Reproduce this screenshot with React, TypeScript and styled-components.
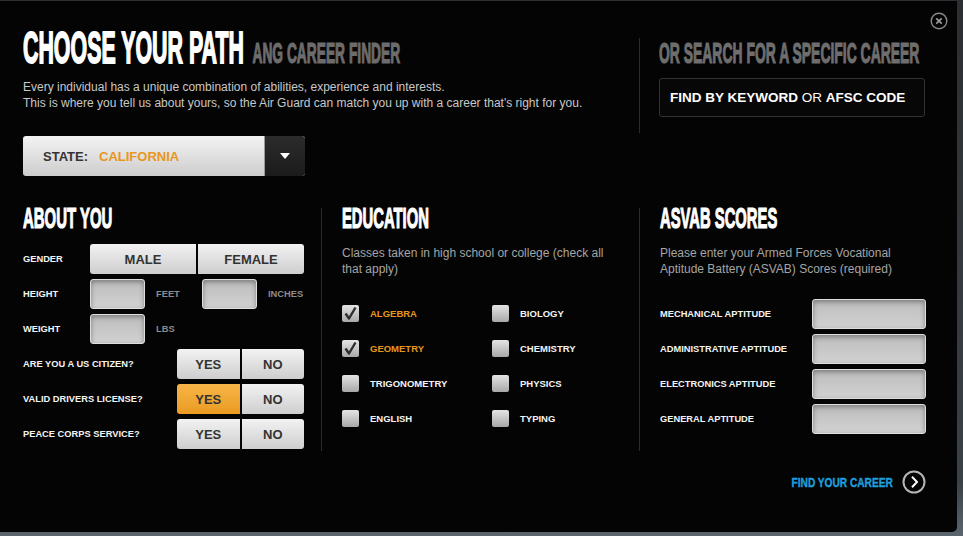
import React from 'react';
import styled, { createGlobalStyle } from 'styled-components';

const GlobalStyle = createGlobalStyle`
  html, body { margin: 0; padding: 0; background: #3f474d; }
  body { font-family: "Liberation Sans", Arial, sans-serif; width: 963px; height: 536px; overflow: hidden; }
  * { box-sizing: border-box; }
`;

const Frame = styled.div`
  width: 963px;
  height: 536px;
  padding-top: 1px;
  background: linear-gradient(#2b2f33, #3a4147 90%, #5b656d);
`;

const Panel = styled.div`
  position: relative;
  width: 957px;
  height: 531px;
  padding: 0 31px 0 23px;
  background: #040404;
  border-radius: 0 0 5px 0;
  color: #fff;
  overflow: hidden;
`;

const CloseButton = styled.button`
  position: absolute;
  top: 11px;
  right: 9px;
  width: 18px;
  height: 18px;
  padding: 0;
  border: 0;
  background: none;
  display: flex;
`;

const TopRow = styled.div`
  display: flex;
`;

const IntroCol = styled.div`
  width: 616px;
  flex: none;
  padding-top: 24px;
`;

const SearchCol = styled.div`
  margin-top: 37px;
  height: 95px;
  flex: 1;
  min-width: 0;
  border-left: 1px solid #2a2a2a;
  padding-left: 19px;
`;

const Heading = styled.h2<{ $size: number; $scale: number; $color?: string; $stroke?: number }>`
  margin: 0;
  display: block;
  width: max-content;
  white-space: nowrap;
  font-family: "Liberation Sans", Arial, sans-serif;
  font-weight: 700;
  font-size: ${(p) => p.$size}px;
  line-height: ${(p) => p.$size}px;
  color: ${(p) => p.$color || '#fff'};
  -webkit-text-stroke: ${(p) => p.$stroke ?? 1.2}px ${(p) => p.$color || '#fff'};
  transform: scaleX(${(p) => p.$scale});
  transform-origin: 0 0;
`;

const TitleSub = styled.span`
  font-size: 29px;
  line-height: 29px;
  color: #6c6c6c;
  -webkit-text-stroke: 1.2px #6c6c6c;
  margin-left: 18px;
`;

const Intro = styled.p`
  margin: 9px 0 0;
  font-size: 12px;
  line-height: 16px;
  color: #c8c8c8;
`;

const Select = styled.div`
  margin-top: 25px;
  width: 282px;
  height: 40px;
  display: flex;
  border-radius: 3px;
  overflow: hidden;
  background: linear-gradient(#f3f3f3, #cdcdcd);
`;

const SelectValue = styled.div`
  flex: 1;
  display: flex;
  align-items: center;
  gap: 11px;
  padding-left: 20px;
  font-size: 13px;
  font-weight: 700;
  color: #333;
`;

const Orange = styled.span`
  color: #e8961d;
`;

const SelectArrow = styled.div`
  width: 41px;
  display: flex;
  align-items: center;
  justify-content: center;
  background: linear-gradient(#2c2c2c, #1b1b1b);
  border-left: 1px solid #9a9a9a;
`;

const SearchBox = styled.div`
  margin-top: 10px;
  width: 266px;
  height: 39px;
  display: flex;
  align-items: center;
  padding-left: 10px;
  border: 1px solid #333;
  border-radius: 3px;
  background: #070707;
  font-size: 13.5px;
  font-weight: 700;
  color: #fff;
`;

const Light = styled.span`
  font-weight: 400;
`;

const Columns = styled.div`
  margin-top: 32px;
  display: grid;
  grid-template-columns: 298px 318px 287px;
`;

const Column = styled.section<{ $divider?: boolean }>`
  min-width: 0;
  padding: 0 ${(p) => (p.$divider ? '0 2px 20px' : '17px 2px 0')};
  border-left: ${(p) => (p.$divider ? '1px solid #2c2c2c' : '0')};
  min-height: 243px;
`;

const ColHeading = styled(Heading)`
  margin-top: -4px;
`;

const ColDesc = styled.p`
  margin: 12px 0 0;
  max-width: 272px;
  font-size: 12px;
  line-height: 16px;
  color: #a4a4a4;
`;

const Rows = styled.div<{ $top: number }>`
  margin-top: ${(p) => p.$top}px;
  display: flex;
  flex-direction: column;
  gap: 5px;
`;

const Row = styled.div`
  height: 30px;
  display: flex;
  align-items: center;
`;

const Label = styled.span<{ $width?: number }>`
  font-size: 9.3px;
  font-weight: 700;
  color: #f4f4f4;
  white-space: nowrap;
  width: ${(p) => (p.$width ? `${p.$width}px` : 'auto')};
  flex: none;
`;

const Unit = styled.span<{ $width?: number }>`
  font-size: 9.3px;
  font-weight: 700;
  color: #8c8c8c;
  margin-left: 11px;
  width: ${(p) => (p.$width ? `${p.$width}px` : 'auto')};
`;

const Segmented = styled.div<{ $width: number }>`
  margin-left: auto;
  width: ${(p) => p.$width}px;
  height: 30px;
  display: flex;
  gap: 2px;
`;

const SegButton = styled.button<{ $active?: boolean; $first?: boolean }>`
  flex: 1;
  height: 30px;
  border: 0;
  padding: 0;
  font-family: "Liberation Sans", Arial, sans-serif;
  font-size: 13px;
  font-weight: 700;
  color: #333;
  border-radius: ${(p) => (p.$first ? '3px 0 0 3px' : '0 3px 3px 0')};
  background: ${(p) =>
    p.$active ? 'linear-gradient(#f7b547, #ea9b22)' : 'linear-gradient(#f2f2f2, #cecece)'};
`;

const TextBox = styled.input<{ $width: number }>`
  width: ${(p) => p.$width}px;
  height: 30px;
  flex: none;
  border: 1px solid #dedede;
  border-radius: 3px;
  background: linear-gradient(#bcbcbc, #d2d2d2);
  box-shadow: inset 0 2px 5px rgba(0, 0, 0, 0.35);
  outline: none;
`;

const RightBox = styled(TextBox)`
  margin-left: auto;
`;

const CheckGrid = styled.div`
  margin-top: 28px;
  display: grid;
  grid-template-columns: 150px 1fr;
  row-gap: 18px;
`;

const CheckItem = styled.label<{ $checked?: boolean }>`
  height: 17px;
  display: flex;
  align-items: center;
  gap: 11px;
  font-size: 9.5px;
  font-weight: 700;
  color: ${(p) => (p.$checked ? '#e8961d' : '#f4f4f4')};
`;

const Box = styled.span`
  width: 17px;
  height: 17px;
  flex: none;
  display: flex;
  border-radius: 2px;
  background: linear-gradient(#e4e4e4, #a8a8a8);
`;

const Footer = styled.div`
  margin-top: 19px;
  height: 24px;
  display: flex;
  justify-content: flex-end;
  align-items: center;
  gap: 9px;
`;

const FindLink = styled.a`
  font-size: 13px;
  font-weight: 700;
  color: #1d9fdd;
  -webkit-text-stroke: 0.4px #1d9fdd;
  white-space: nowrap;
  display: inline-block;
  transform: scaleX(0.78);
  transform-origin: right center;
`;

const Check = () => (
  <svg width="17" height="17" viewBox="0 0 17 17">
    <path d="M3.5 8.5 L7 13.5 L13.5 2.5" fill="none" stroke="#2e2e2e" strokeWidth="2.4" strokeLinejoin="round" />
  </svg>
);

const classes: [string, boolean][] = [
  ['ALGEBRA', true],
  ['BIOLOGY', false],
  ['GEOMETRY', true],
  ['CHEMISTRY', false],
  ['TRIGONOMETRY', false],
  ['PHYSICS', false],
  ['ENGLISH', false],
  ['TYPING', false],
];

const yesNo: [string, boolean][] = [
  ['ARE YOU A US CITIZEN?', false],
  ['VALID DRIVERS LICENSE?', true],
  ['PEACE CORPS SERVICE?', false],
];

const aptitudes = ['MECHANICAL APTITUDE', 'ADMINISTRATIVE APTITUDE', 'ELECTRONICS APTITUDE', 'GENERAL APTITUDE'];

export default function App() {
  return (
    <Frame>
      <GlobalStyle />
      <Panel>
        <CloseButton aria-label="Close">
          <svg width="18" height="18" viewBox="0 0 18 18">
            <circle cx="9" cy="9" r="7.8" fill="none" stroke="#8a8a8a" strokeWidth="1.4" />
            <path d="M6.3 6.3 L11.7 11.7 M11.7 6.3 L6.3 11.7" stroke="#9a9a9a" strokeWidth="1.8" />
          </svg>
        </CloseButton>

        <TopRow>
          <IntroCol>
            <Heading as="h1" $size={45} $scale={0.475} $stroke={1.8}>
              CHOOSE YOUR PATH<TitleSub>ANG CAREER FINDER</TitleSub>
            </Heading>
            <Intro>
              Every individual has a unique combination of abilities, experience and interests.
              <br />
              This is where you tell us about yours, so the Air Guard can match you up with a career that's right for you.
            </Intro>
            <Select>
              <SelectValue>
                <span>STATE:</span>
                <Orange>CALIFORNIA</Orange>
              </SelectValue>
              <SelectArrow>
                <svg width="10" height="6" viewBox="0 0 10 6">
                  <path d="M0 0 H10 L5 6 Z" fill="#fff" />
                </svg>
              </SelectArrow>
            </Select>
          </IntroCol>
          <SearchCol>
            <Heading $size={30} $scale={0.464} $color="#6e6e6e">
              OR SEARCH FOR A SPECIFIC CAREER
            </Heading>
            <SearchBox>
              FIND BY KEYWORD&nbsp;<Light>OR</Light>&nbsp;AFSC CODE
            </SearchBox>
          </SearchCol>
        </TopRow>

        <Columns>
          <Column>
            <ColHeading $size={29} $scale={0.515}>ABOUT YOU</ColHeading>
            <Rows $top={11}>
              <Row>
                <Label $width={67}>GENDER</Label>
                <Segmented $width={214}>
                  <SegButton $first>MALE</SegButton>
                  <SegButton>FEMALE</SegButton>
                </Segmented>
              </Row>
              <Row>
                <Label $width={67}>HEIGHT</Label>
                <TextBox $width={55} />
                <Unit $width={46}>FEET</Unit>
                <TextBox $width={55} />
                <Unit>INCHES</Unit>
              </Row>
              <Row>
                <Label $width={67}>WEIGHT</Label>
                <TextBox $width={55} />
                <Unit>LBS</Unit>
              </Row>
              {yesNo.map(([q, yes]) => (
                <Row key={q}>
                  <Label>{q}</Label>
                  <Segmented $width={127}>
                    <SegButton $first $active={yes}>YES</SegButton>
                    <SegButton>NO</SegButton>
                  </Segmented>
                </Row>
              ))}
            </Rows>
          </Column>

          <Column $divider>
            <ColHeading $size={29} $scale={0.51}>EDUCATION</ColHeading>
            <ColDesc>Classes taken in high school or college (check all that apply)</ColDesc>
            <CheckGrid>
              {classes.map(([name, checked]) => (
                <CheckItem key={name} $checked={checked}>
                  <Box>{checked && <Check />}</Box>
                  {name}
                </CheckItem>
              ))}
            </CheckGrid>
          </Column>

          <Column $divider>
            <ColHeading $size={29} $scale={0.51}>ASVAB SCORES</ColHeading>
            <ColDesc>
              Please enter your Armed Forces Vocational
              <br />
              Aptitude Battery (ASVAB) Scores (required)
            </ColDesc>
            <Rows $top={22}>
              {aptitudes.map((a) => (
                <Row key={a}>
                  <Label>{a}</Label>
                  <RightBox $width={114} />
                </Row>
              ))}
            </Rows>
          </Column>
        </Columns>

        <Footer>
          <FindLink>FIND YOUR CAREER</FindLink>
          <svg width="24" height="24" viewBox="0 0 24 24">
            <circle cx="12" cy="12" r="10.5" fill="none" stroke="#b5b5b5" strokeWidth="2" />
            <path d="M10 6.8 L15 12 L10 17.2" fill="none" stroke="#fff" strokeWidth="2" />
          </svg>
        </Footer>
      </Panel>
    </Frame>
  );
}
